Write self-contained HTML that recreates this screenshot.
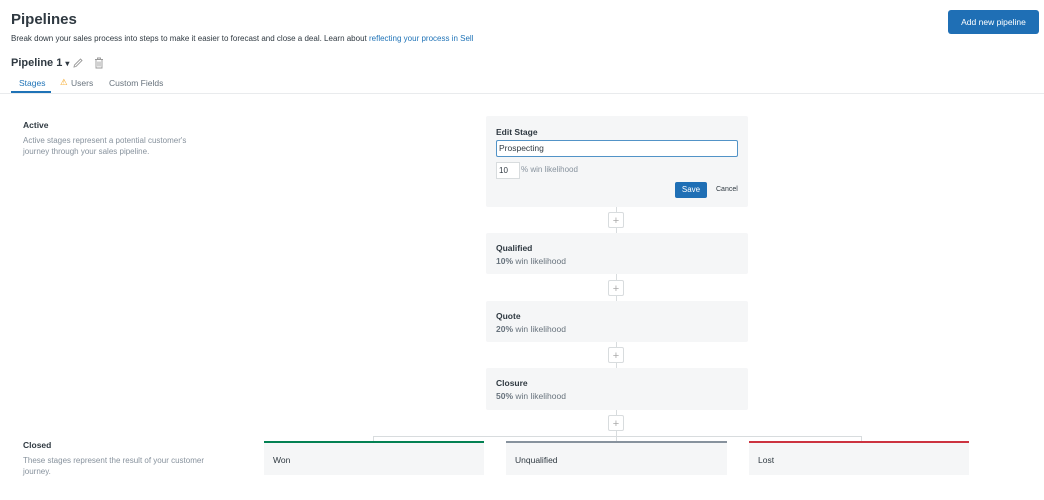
<!DOCTYPE html>
<html><head><style>
body{margin:0;width:1044px;height:500px;background:#fff;font-family:"Liberation Sans",sans-serif;color:#2f3941;position:relative;overflow:hidden}
.a{position:absolute}
.box{position:absolute;left:486px;width:262px;background:#f5f6f7;border-radius:2px}
.box b{position:absolute;left:10px;top:10px;font-size:8.5px;color:#2f3941;font-weight:600}
.box span{position:absolute;left:10px;top:23px;font-size:8.5px;color:#68737d}
.box span i{font-style:normal;font-weight:bold;color:#68737d}
.plus{position:absolute;left:608px;width:14px;height:14px;border:1px solid #d8dcde;background:#fff;border-radius:2px;color:#aaa;font-size:11px;line-height:16px;text-align:center}
.vl{position:absolute;left:616px;width:1px;background:#d8dcde}
.cl{position:absolute;top:441px;height:32px;background:#f5f6f7;border-top:2px solid}
.cl b{position:absolute;left:9px;top:12px;font-size:8.5px;font-weight:normal;color:#2f3941}
</style></head><body>
<div class="a" style="left:11px;top:11px;font-size:15px;font-weight:bold;color:#2f3941">Pipelines</div>
<div class="a" style="left:11px;top:34px;font-size:8px;color:#2f3941">Break down your sales process into steps to make it easier to forecast and close a deal. Learn about <span style="color:#1f73b7">reflecting your process in Sell</span></div>
<div class="a" style="left:948px;top:10px;width:91px;height:24px;background:#1f6fb5;border-radius:3px;color:#fff;font-size:8.5px;line-height:24px;text-align:center">Add new pipeline</div>
<div class="a" style="left:11px;top:57px;font-size:11px;color:#2f3941;font-weight:600">Pipeline 1 <span style="font-size:8px">▾</span></div>
<svg class="a" style="left:72px;top:57px" width="12" height="12" viewBox="0 0 12 12"><path d="M2 10 L2.5 8 L8.5 2 L10 3.5 L4 9.5 Z" fill="none" stroke="#999" stroke-width="0.9"/></svg>
<svg class="a" style="left:94px;top:57px" width="10" height="12" viewBox="0 0 10 12"><path d="M1 2.5H9M3.5 2.5V1H6.5V2.5M2 2.5V11H8V2.5M4 4.5V9.5M6 4.5V9.5" fill="none" stroke="#999" stroke-width="0.9"/></svg>
<div class="a" style="left:19px;top:78px;font-size:8.5px;color:#1f73b7">Stages</div>
<div class="a" style="left:11px;top:91px;width:40px;height:2px;background:#1f73b7"></div>
<div class="a" style="left:60px;top:77px;font-size:8.5px;color:#f5a623">⚠</div>
<div class="a" style="left:71px;top:78px;font-size:8.5px;color:#68737d">Users</div>
<div class="a" style="left:109px;top:78px;font-size:8.5px;color:#68737d">Custom Fields</div>
<div class="a" style="left:0;top:93px;width:1044px;height:1px;background:#e9ebed"></div>

<div class="a" style="left:23px;top:120px;font-size:8.5px;font-weight:bold">Active</div>
<div class="a" style="left:23px;top:135px;font-size:8px;color:#87929d;line-height:11px;width:182px">Active stages represent a potential customer's journey through your sales pipeline.</div>
<div class="a" style="left:23px;top:440px;font-size:8.5px;font-weight:bold">Closed</div>
<div class="a" style="left:23px;top:455px;font-size:8px;color:#87929d;line-height:11px;width:196px">These stages represent the result of your customer journey.</div>

<div class="box" style="top:116px;height:91px">
<b style="top:11px">Edit Stage</b>
<div class="a" style="left:10px;top:24px;width:238px;height:15px;border:1px solid #5293c7;background:#fff;border-radius:2px;font-size:8.5px;line-height:15px;padding-left:2px">Prospecting</div>
<div class="a" style="left:10px;top:46px;width:20px;height:15px;border:1px solid #d8dcde;background:#fff;font-size:8px;line-height:15px;padding-left:2px">10</div>
<div class="a" style="left:35px;top:49px;font-size:8px;color:#87929d">% win likelihood</div>
<div class="a" style="left:189px;top:66px;width:32px;height:16px;background:#1f6fb5;border-radius:2px;color:#fff;font-size:8px;line-height:16px;text-align:center">Save</div>
<div class="a" style="left:230px;top:70px;font-size:7px;color:#2f3941">Cancel</div>
</div>
<div class="vl" style="top:207px;height:26px"></div><div class="plus" style="top:212px">+</div>
<div class="box" style="top:233px;height:41px"><b>Qualified</b><span><i>10%</i> win likelihood</span></div>
<div class="vl" style="top:274px;height:27px"></div><div class="plus" style="top:280px">+</div>
<div class="box" style="top:301px;height:41px"><b>Quote</b><span><i>20%</i> win likelihood</span></div>
<div class="vl" style="top:342px;height:26px"></div><div class="plus" style="top:347px">+</div>
<div class="box" style="top:368px;height:42px"><b>Closure</b><span><i>50%</i> win likelihood</span></div>
<div class="vl" style="top:410px;height:31px"></div><div class="plus" style="top:415px">+</div>
<div class="a" style="left:373px;top:436px;width:487px;height:5px;border:1px solid #d8dcde;border-bottom:none"></div>
<div class="cl" style="left:264px;width:220px;border-color:#038153"><b>Won</b></div>
<div class="cl" style="left:506px;width:221px;border-color:#87929d"><b>Unqualified</b></div>
<div class="cl" style="left:749px;width:220px;border-color:#cc3340"><b>Lost</b></div>
</body></html>
